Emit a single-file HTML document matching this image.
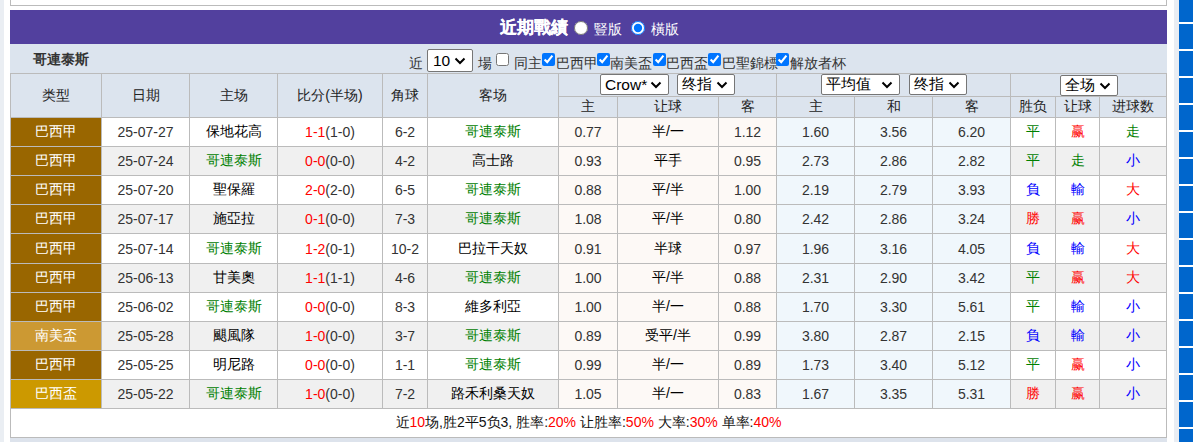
<!DOCTYPE html>
<html><head><meta charset="utf-8"><style>
*{box-sizing:border-box}
html,body{margin:0;padding:0;background:#fff;width:1193px;height:442px;overflow:hidden;font-family:"Liberation Sans",sans-serif;font-size:14px;color:#000}
.abs{position:absolute}
#lstrip{left:0;top:0;width:4px;height:442px;background:#EAEEF3}
#topbox{left:10px;top:-20px;width:1157px;height:26px;border:1px solid #BBB;background:#fff}
#purple{left:10px;top:10px;width:1157px;height:34px;background:#52409E;color:#fff}
#title{left:490px;top:8px;font-size:17px;font-weight:bold;white-space:nowrap;line-height:20px;-webkit-text-stroke:0.2px #fff}
.rad{margin:0;width:14px;height:14px;top:11px}
.lbl{top:9.5px;font-size:14px;line-height:18px;white-space:nowrap}
#filter{left:10px;top:44px;width:1157px;height:30px;background:#DCE4EE}
#team{left:23px;top:7px;font-weight:bold;font-size:14px;color:#333}
#tbl{position:absolute;left:10px;top:73px;border-collapse:collapse;table-layout:fixed;width:1157px}
#tbl td,#tbl th{border:1px solid #BBB;text-align:center;padding:0;font-weight:normal;white-space:nowrap;overflow:hidden}
#tbl th{background:#DCE4EE;color:#222}
#tbl tr.h1 th{height:23px}
#tbl tr.h2 th{height:21px}
#tbl tbody td{height:29px;background:#fff;color:#333}
#tbl tbody tr.ev td{background:#F0F0F0}
#tbl tbody td.pk, #tbl tbody tr.ev td.pk{background:#FDF9F6}
#tbl tbody td.bl, #tbl tbody tr.ev td.bl{background:#F0F7FC}
#tbl tbody td.ty{color:#fff}
.gn{color:#008000 !important}
#tbl tbody td.cj{color:#000}
.rd{color:#FF0000}
#tbl tr.sum td{background:#fff;height:29px;color:#111}
#botband{left:10px;top:438px;width:1157px;height:4px;background:#DDE3EC}
#sstrip{left:1174px;top:0;width:5px;height:442px;background:#E9EDF3}
.sb{position:absolute;left:1179px;width:14px;height:25px;background:#0066CC}
.t{position:absolute;font-size:14px;line-height:20px;white-space:nowrap;color:#333}
.cb{position:absolute;margin:0;width:13px;height:13px}
.sel{position:absolute;background:#fff;border:1px solid #767676;border-radius:2px;overflow:hidden}
.st{position:absolute;top:0;bottom:0;display:flex;align-items:center;font-size:15.5px;color:#000;white-space:nowrap}
.chev{position:absolute;top:0;bottom:0;display:flex;align-items:center}
.chev svg{display:block}
select{font-family:"Liberation Sans",sans-serif}
</style></head><body>
<div id="lstrip" class="abs"></div>
<div id="topbox" class="abs"></div>
<div id="purple" class="abs"><div id="title" class="abs">近期戰績</div><input class="abs rad" style="left:564px" type="radio" name="v"><span class="abs lbl" style="left:584px">豎版</span><input class="abs rad" style="left:621px" type="radio" name="v" checked><span class="abs lbl" style="left:641px">橫版</span></div>
<div id="filter" class="abs"><div id="team" class="abs">哥連泰斯</div></div>
<span class="t" style="left:409px;top:53px;">近</span><div class="sel" style="left:427px;top:49px;width:46px;height:23px"><span class="st" style="left:5px;padding-top:1px">10</span><span class="chev" style="right:6px"><svg width="12" height="8" viewBox="0 0 12 8"><path d="M1.5 1.5 L6 6 L10.5 1.5" fill="none" stroke="#000" stroke-width="2"/></svg></span></div><span class="t" style="left:478px;top:53px;">場</span><input type="checkbox" class="cb" style="left:496px;top:53px"><span class="t" style="left:514px;top:53px;">同主</span><input type="checkbox" class="cb" style="left:542px;top:53px" checked><span class="t" style="left:556px;top:53px;">巴西甲</span><input type="checkbox" class="cb" style="left:597px;top:53px" checked><span class="t" style="left:610px;top:53px;">南美盃</span><input type="checkbox" class="cb" style="left:653px;top:53px" checked><span class="t" style="left:666px;top:53px;">巴西盃</span><input type="checkbox" class="cb" style="left:708px;top:53px" checked><span class="t" style="left:722px;top:53px;">巴聖錦標</span><input type="checkbox" class="cb" style="left:776px;top:53px" checked><span class="t" style="left:790px;top:53px;">解放者杯</span>
<table id="tbl"><col style="width:91px"><col style="width:88px"><col style="width:88px"><col style="width:105px"><col style="width:45px"><col style="width:131px"><col style="width:59px"><col style="width:101px"><col style="width:58px"><col style="width:78px"><col style="width:78px"><col style="width:78px"><col style="width:45px"><col style="width:44px"><col style="width:67px">
<thead>
<tr class="h1"><th rowspan="2">类型</th><th rowspan="2">日期</th><th rowspan="2">主场</th><th rowspan="2">比分(半场)</th><th rowspan="2">角球</th><th rowspan="2">客场</th><th colspan="3"></th><th colspan="3"></th><th colspan="3"></th></tr>
<tr class="h2"><th>主</th><th>让球</th><th>客</th><th>主</th><th>和</th><th>客</th><th>胜负</th><th>让球</th><th>进球数</th></tr>
</thead>
<tbody>
<tr><td class="ty" style="background:#996600">巴西甲</td><td>25-07-27</td><td class="cj">保地花高</td><td><span class="rd">1-1</span>(1-0)</td><td>6-2</td><td class="gn">哥連泰斯</td><td class="pk">0.77</td><td class="pk cj">半/一</td><td class="pk">1.12</td><td class="bl">1.60</td><td class="bl">3.56</td><td class="bl">6.20</td><td style="color:#008000">平</td><td style="color:#FF0000">赢</td><td style="color:#008000">走</td></tr><tr class="ev"><td class="ty" style="background:#996600">巴西甲</td><td>25-07-24</td><td class="gn">哥連泰斯</td><td><span class="rd">0-0</span>(0-0)</td><td>4-2</td><td class="cj">高士路</td><td class="pk">0.93</td><td class="pk cj">平手</td><td class="pk">0.95</td><td class="bl">2.73</td><td class="bl">2.86</td><td class="bl">2.82</td><td style="color:#008000">平</td><td style="color:#008000">走</td><td style="color:#0000FF">小</td></tr><tr><td class="ty" style="background:#996600">巴西甲</td><td>25-07-20</td><td class="cj">聖保羅</td><td><span class="rd">2-0</span>(2-0)</td><td>6-5</td><td class="gn">哥連泰斯</td><td class="pk">0.88</td><td class="pk cj">平/半</td><td class="pk">1.00</td><td class="bl">2.19</td><td class="bl">2.79</td><td class="bl">3.93</td><td style="color:#0000FF">負</td><td style="color:#0000FF">輸</td><td style="color:#FF0000">大</td></tr><tr class="ev"><td class="ty" style="background:#996600">巴西甲</td><td>25-07-17</td><td class="cj">施亞拉</td><td><span class="rd">0-1</span>(0-0)</td><td>7-3</td><td class="gn">哥連泰斯</td><td class="pk">1.08</td><td class="pk cj">平/半</td><td class="pk">0.80</td><td class="bl">2.42</td><td class="bl">2.86</td><td class="bl">3.24</td><td style="color:#FF0000">勝</td><td style="color:#FF0000">赢</td><td style="color:#0000FF">小</td></tr><tr style="height:30px"><td class="ty" style="background:#996600">巴西甲</td><td>25-07-14</td><td class="gn">哥連泰斯</td><td><span class="rd">1-2</span>(0-1)</td><td>10-2</td><td class="cj">巴拉干天奴</td><td class="pk">0.91</td><td class="pk cj">半球</td><td class="pk">0.97</td><td class="bl">1.96</td><td class="bl">3.16</td><td class="bl">4.05</td><td style="color:#0000FF">負</td><td style="color:#0000FF">輸</td><td style="color:#FF0000">大</td></tr><tr class="ev"><td class="ty" style="background:#996600">巴西甲</td><td>25-06-13</td><td class="cj">甘美奧</td><td><span class="rd">1-1</span>(1-1)</td><td>4-6</td><td class="gn">哥連泰斯</td><td class="pk">1.00</td><td class="pk cj">平/半</td><td class="pk">0.88</td><td class="bl">2.31</td><td class="bl">2.90</td><td class="bl">3.42</td><td style="color:#008000">平</td><td style="color:#FF0000">赢</td><td style="color:#FF0000">大</td></tr><tr><td class="ty" style="background:#996600">巴西甲</td><td>25-06-02</td><td class="gn">哥連泰斯</td><td><span class="rd">0-0</span>(0-0)</td><td>8-3</td><td class="cj">維多利亞</td><td class="pk">1.00</td><td class="pk cj">半/一</td><td class="pk">0.88</td><td class="bl">1.70</td><td class="bl">3.30</td><td class="bl">5.61</td><td style="color:#008000">平</td><td style="color:#0000FF">輸</td><td style="color:#0000FF">小</td></tr><tr class="ev"><td class="ty" style="background:#CC9933">南美盃</td><td>25-05-28</td><td class="cj">颶風隊</td><td><span class="rd">1-0</span>(0-0)</td><td>3-7</td><td class="gn">哥連泰斯</td><td class="pk">0.89</td><td class="pk cj">受平/半</td><td class="pk">0.99</td><td class="bl">3.80</td><td class="bl">2.87</td><td class="bl">2.15</td><td style="color:#0000FF">負</td><td style="color:#0000FF">輸</td><td style="color:#0000FF">小</td></tr><tr><td class="ty" style="background:#996600">巴西甲</td><td>25-05-25</td><td class="cj">明尼路</td><td><span class="rd">0-0</span>(0-0)</td><td>1-1</td><td class="gn">哥連泰斯</td><td class="pk">0.99</td><td class="pk cj">半/一</td><td class="pk">0.89</td><td class="bl">1.73</td><td class="bl">3.40</td><td class="bl">5.12</td><td style="color:#008000">平</td><td style="color:#FF0000">赢</td><td style="color:#0000FF">小</td></tr><tr class="ev"><td class="ty" style="background:#CC9900">巴西盃</td><td>25-05-22</td><td class="gn">哥連泰斯</td><td><span class="rd">1-0</span>(0-0)</td><td>7-2</td><td class="cj">路禾利桑天奴</td><td class="pk">1.05</td><td class="pk cj">半/一</td><td class="pk">0.83</td><td class="bl">1.67</td><td class="bl">3.35</td><td class="bl">5.31</td><td style="color:#FF0000">勝</td><td style="color:#FF0000">赢</td><td style="color:#0000FF">小</td></tr>
<tr class="sum"><td colspan="15">近<span class="rd">10</span>场,胜2平5负3, 胜率:<span class="rd">20%</span> 让胜率:<span class="rd">50%</span> 大率:<span class="rd">30%</span> 单率:<span class="rd">40%</span></td></tr>
</tbody></table>
<div class="sel" style="left:600px;top:74px;width:69px;height:21px"><span class="st" style="left:4px;padding-top:0px">Crow*</span><span class="chev" style="right:6px"><svg width="12" height="8" viewBox="0 0 12 8"><path d="M1.5 1.5 L6 6 L10.5 1.5" fill="none" stroke="#000" stroke-width="2"/></svg></span></div><div class="sel" style="left:677px;top:74px;width:58px;height:21px"><span class="st" style="left:4px;padding-top:0px"><span style="font-size:15px">终指</span></span><span class="chev" style="right:6px"><svg width="12" height="8" viewBox="0 0 12 8"><path d="M1.5 1.5 L6 6 L10.5 1.5" fill="none" stroke="#000" stroke-width="2"/></svg></span></div><div class="sel" style="left:821px;top:74px;width:79px;height:21px"><span class="st" style="left:4px;padding-top:0px"><span style="font-size:15px">平均值</span></span><span class="chev" style="right:6px"><svg width="12" height="8" viewBox="0 0 12 8"><path d="M1.5 1.5 L6 6 L10.5 1.5" fill="none" stroke="#000" stroke-width="2"/></svg></span></div><div class="sel" style="left:909px;top:74px;width:58px;height:21px"><span class="st" style="left:4px;padding-top:0px"><span style="font-size:15px">终指</span></span><span class="chev" style="right:6px"><svg width="12" height="8" viewBox="0 0 12 8"><path d="M1.5 1.5 L6 6 L10.5 1.5" fill="none" stroke="#000" stroke-width="2"/></svg></span></div><div class="sel" style="left:1060px;top:75px;width:58px;height:21px"><span class="st" style="left:4px;padding-top:0px"><span style="font-size:15px">全场</span></span><span class="chev" style="right:6px"><svg width="12" height="8" viewBox="0 0 12 8"><path d="M1.5 1.5 L6 6 L10.5 1.5" fill="none" stroke="#000" stroke-width="2"/></svg></span></div>
<div id="botband" class="abs"></div>
<div id="sstrip" class="abs"></div>
<div class="sb" style="top:-3px"></div><div class="sb" style="top:24px"></div><div class="sb" style="top:51px"></div><div class="sb" style="top:78px"></div><div class="sb" style="top:105px"></div><div class="sb" style="top:132px"></div><div class="sb" style="top:159px"></div><div class="sb" style="top:186px"></div><div class="sb" style="top:213px"></div><div class="sb" style="top:240px"></div><div class="sb" style="top:267px"></div><div class="sb" style="top:294px"></div><div class="sb" style="top:321px"></div><div class="sb" style="top:348px"></div><div class="sb" style="top:375px"></div><div class="sb" style="top:402px"></div><div class="sb" style="top:429px"></div>
</body></html>
